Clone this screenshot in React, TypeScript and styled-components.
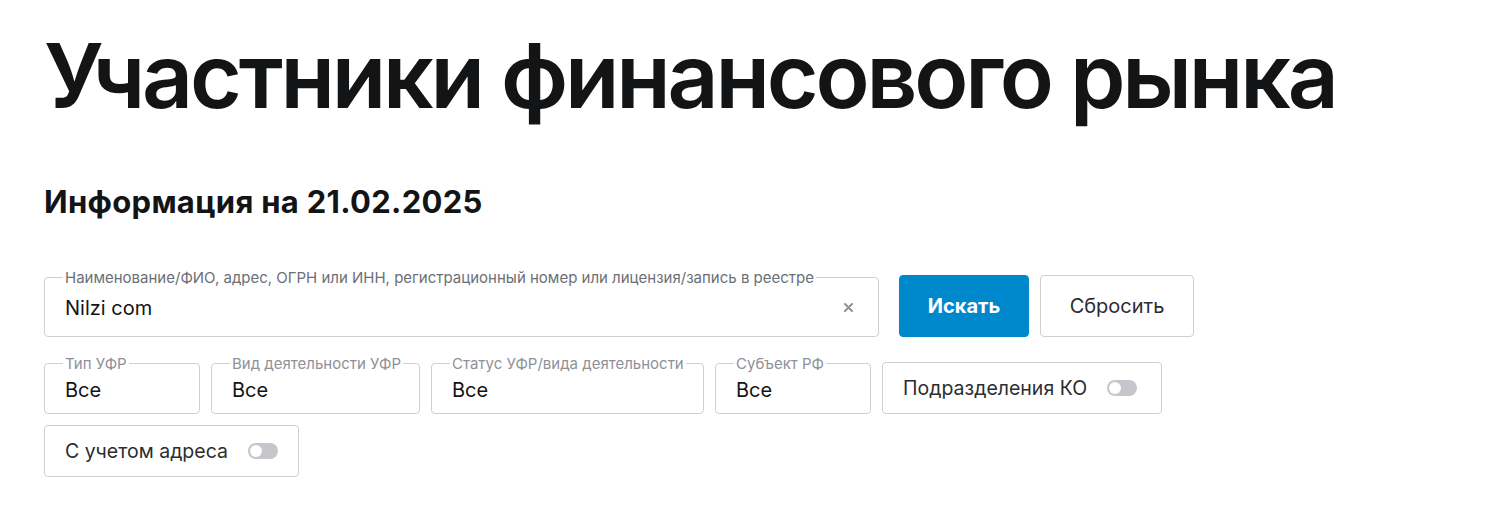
import React from 'react';
import styled, { createGlobalStyle } from 'styled-components';

const GlobalStyle = createGlobalStyle`
  html, body {
    margin: 0;
    padding: 0;
    background: #fff;
  }
  body {
    font-family: Inter, "Noto Sans", sans-serif;
    color: #131416;
  }
`;

const StPage = styled.div`
  padding: 21px 44px 0 44px;
`;

const StTitle = styled.h1`
  margin: 0;
  font-size: 89px;
  font-weight: 600;
  line-height: 110px;
  letter-spacing: -3.2px;
  color: #131416;
`;

const StSubtitle = styled.h2`
  margin: 51px 0 0 0;
  font-size: 31px;
  font-weight: 700;
  line-height: 40px;
  letter-spacing: 0.3px;
  color: #131416;
`;

const StForm = styled.form`
  margin-top: 48px;
  display: flex;
  flex-direction: column;
`;

type RowProps = { $gap: number; $top: number };
const StRow = styled.div<RowProps>`
  display: flex;
  align-items: flex-end;
  gap: ${(p) => p.$gap}px;
  margin-top: ${(p) => p.$top}px;
`;

type FieldProps = { $width: number; $height: number; $muted?: boolean };
const StField = styled.fieldset<FieldProps>`
  box-sizing: border-box;
  width: ${(p) => p.$width}px;
  height: ${(p) => p.$height}px;
  margin: 0;
  padding: 0 25px 0 20px;
  min-width: 0;
  border: 1px solid #cdd0d4;
  border-radius: 4px;
  display: flex;
  align-items: center;
  gap: 12px;

  legend {
    font-size: 15px;
    line-height: 15px;
    padding: 0 2px;
    margin-left: -2px;
    color: ${(p) => (p.$muted ? '#8d9199' : '#6b6f76')};
    white-space: nowrap;
  }
`;

const StValue = styled.div`
  flex: 1;
  font-size: 20px;
  line-height: 24px;
  color: #131416;
  margin-top: -5px;
`;

const StClear = styled.svg`
  width: 9px;
  height: 9px;
  margin-top: -6px;
  flex: none;
`;

type ButtonProps = { $primary?: boolean; $width: number };
const StButton = styled.button<ButtonProps>`
  box-sizing: border-box;
  width: ${(p) => p.$width}px;
  height: 62px;
  margin-left: ${(p) => (p.$primary ? 9 : 0)}px;
  border-radius: 4px;
  font-family: inherit;
  font-size: 20px;
  cursor: pointer;
  border: 1px solid ${(p) => (p.$primary ? '#0088cc' : '#cdd0d4')};
  background: ${(p) => (p.$primary ? '#0088cc' : '#fff')};
  color: ${(p) => (p.$primary ? '#fff' : '#2b2d31')};
  font-weight: ${(p) => (p.$primary ? 700 : 400)};
`;

type ToggleBoxProps = { $width: number };
const StToggleBox = styled.label<ToggleBoxProps>`
  box-sizing: border-box;
  width: ${(p) => p.$width}px;
  height: 52px;
  border: 1px solid #cdd0d4;
  border-radius: 4px;
  padding: 0 20px;
  display: flex;
  align-items: center;
  gap: 20px;
  font-size: 19.5px;
  color: #2b2d31;
  white-space: nowrap;
`;

const StSwitch = styled.span`
  flex: none;
  width: 30px;
  height: 16px;
  border-radius: 8px;
  background: #c4c6cb;
  position: relative;

  &::after {
    content: '';
    position: absolute;
    left: 2px;
    top: 2px;
    width: 12px;
    height: 12px;
    border-radius: 50%;
    background: #fff;
  }
`;

const selects = [
  { label: 'Тип УФР', width: 156 },
  { label: 'Вид деятельности УФР', width: 209 },
  { label: 'Статус УФР/вида деятельности', width: 273 },
  { label: 'Субъект РФ', width: 156 }
];

const App = () => {
  return (
    <>
      <GlobalStyle />
      <StPage>
        <StTitle>Участники финансового рынка</StTitle>
        <StSubtitle>Информация на 21.02.2025</StSubtitle>
        <StForm onSubmit={(e) => e.preventDefault()}>
          <StRow $gap={11} $top={0}>
            <StField $width={835} $height={67}>
              <legend>
                Наименование/ФИО, адрес, ОГРН или ИНН, регистрационный номер или лицензия/запись в реестре
              </legend>
              <StValue>Nilzi com</StValue>
              <StClear viewBox="0 0 9 9">
                <path d="M1 1L8 8M8 1L1 8" stroke="#8d9199" strokeWidth="2" strokeLinecap="round" />
              </StClear>
            </StField>
            <StButton $primary $width={130}>Искать</StButton>
            <StButton $width={154}>Сбросить</StButton>
          </StRow>
          <StRow $gap={11} $top={19}>
            {selects.map((s, i) => (
              <StField key={i} $width={s.width} $height={58} $muted>
                <legend>{s.label}</legend>
                <StValue>Все</StValue>
              </StField>
            ))}
            <StToggleBox $width={280}>
              Подразделения КО
              <StSwitch />
            </StToggleBox>
          </StRow>
          <StRow $gap={11} $top={11}>
            <StToggleBox $width={255}>
              С учетом адреса
              <StSwitch />
            </StToggleBox>
          </StRow>
        </StForm>
      </StPage>
    </>
  );
};

export default App;
